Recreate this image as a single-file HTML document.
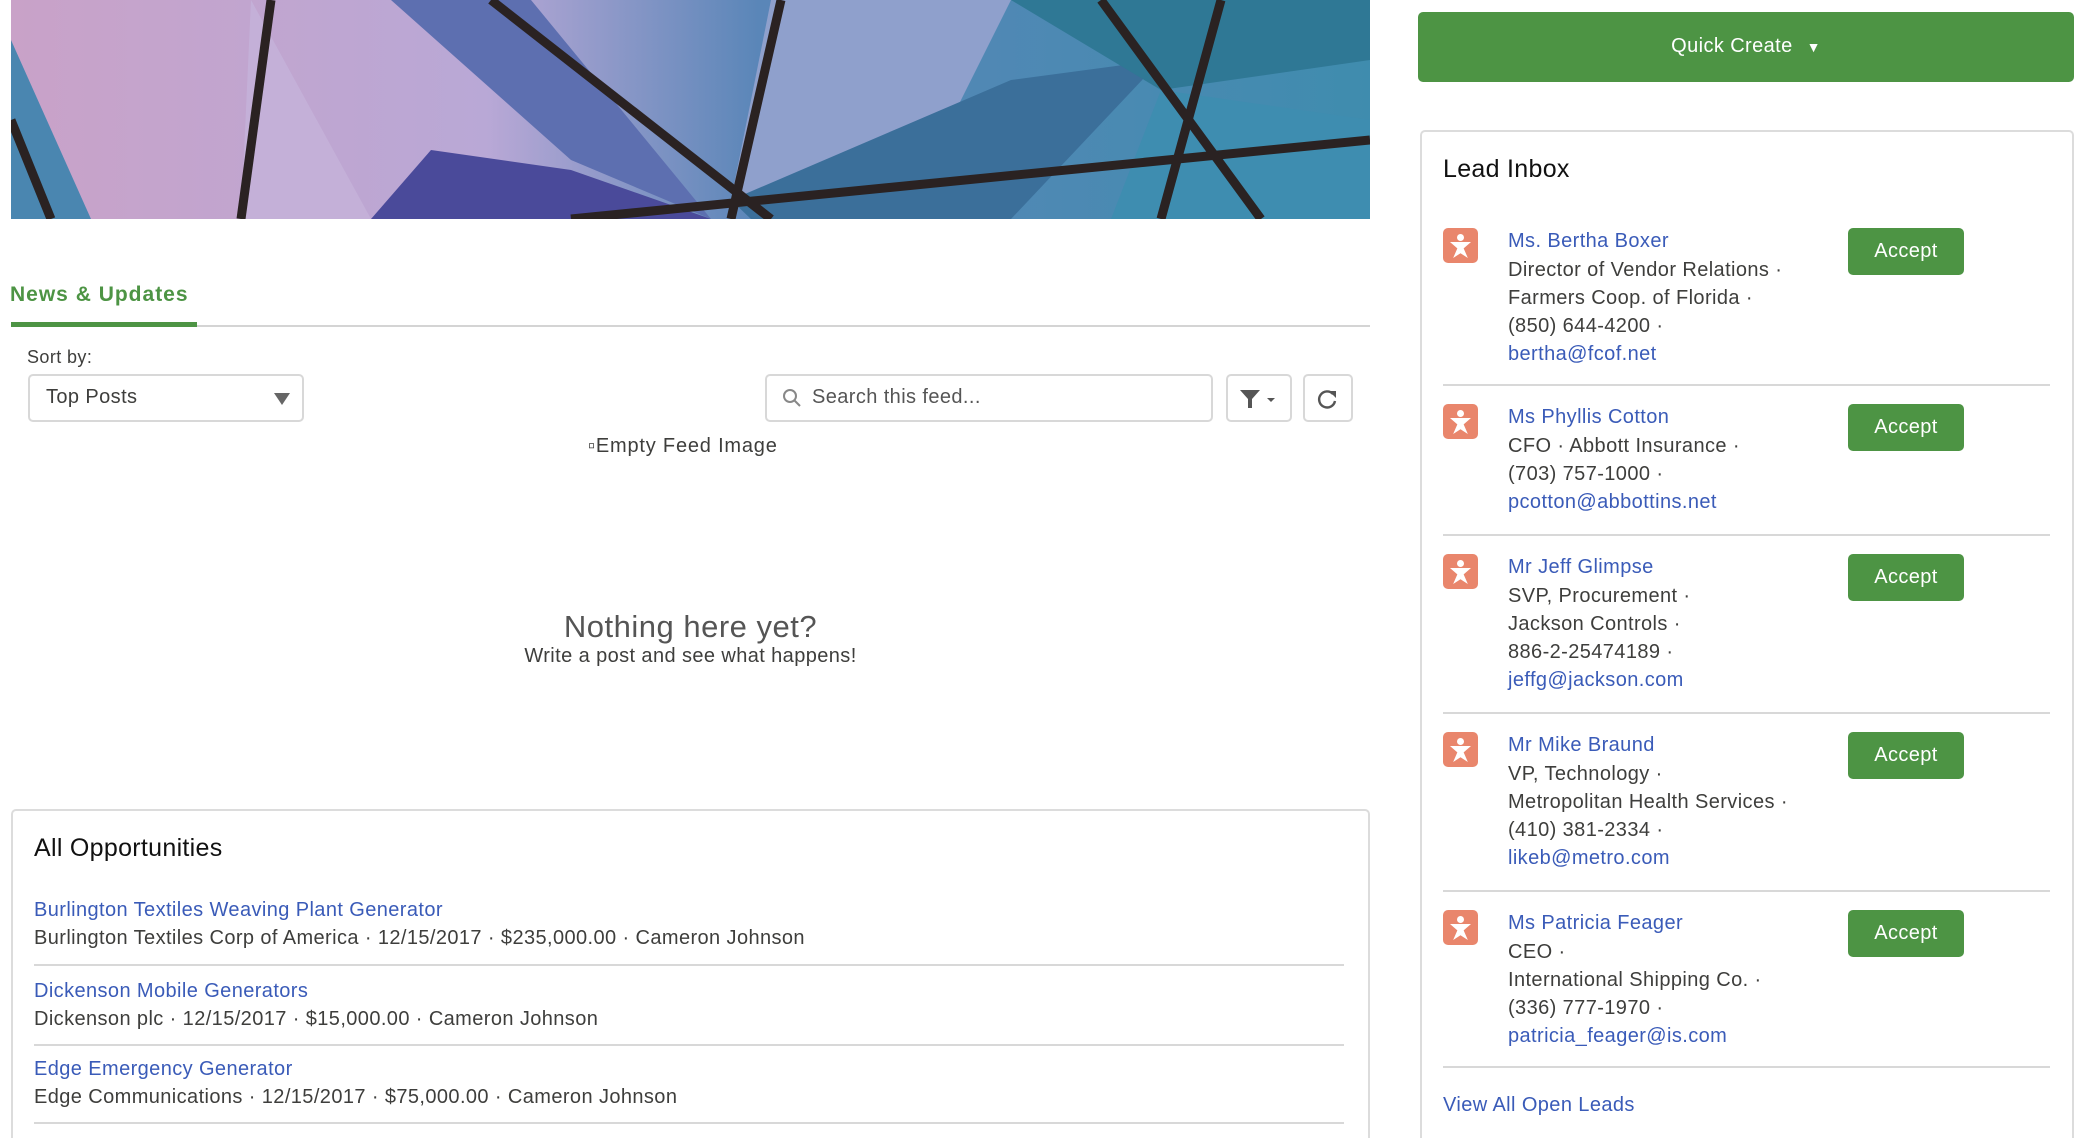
<!DOCTYPE html>
<html style="width:2082px;height:1138px;overflow:hidden"><head><meta charset="utf-8"><style>
*{margin:0;padding:0;box-sizing:border-box}
body{width:2082px;height:1138px;background:#fff;font-family:"Liberation Sans",sans-serif;color:#3e3e3c;position:relative;overflow:hidden}
.a{position:absolute;white-space:nowrap}
.lnk{color:#3a5bb8}
.t{font-size:20px;letter-spacing:.4px}
.line{position:absolute;height:2px;background:#d8d8d8}
.btn{position:absolute;background:#4d9444;color:#fff;border-radius:5px;font-size:20px;text-align:center;letter-spacing:.4px}
.ico{position:absolute;width:35px;height:35px;background:#e9866c;border-radius:5px}
.ico::before{content:"";position:absolute;left:14px;top:6px;width:7px;height:7px;border-radius:50%;background:#fff}
.ico::after{content:"";position:absolute;left:7px;top:14px;width:21px;height:16px;background:#fff;clip-path:polygon(0 0,100% 0,65% 40%,85% 100%,50% 70%,15% 100%,35% 40%)}
</style></head><body>
<svg class="a" style="left:11px;top:0" width="1359" height="219" viewBox="0 0 1359 219">
<defs><linearGradient id="g" x1="0" x2="1" y1="0" y2="0"><stop offset="0" stop-color="#c9a2c8"/><stop offset=".35" stop-color="#b9a8d6"/><stop offset=".55" stop-color="#5a86b8"/><stop offset="1" stop-color="#3f8cae"/></linearGradient></defs>
<rect width="1359" height="219" fill="url(#g)"/>
<polygon points="0,40 80,219 0,219" fill="#4a86b0"/>
<polygon points="240,0 360,219 230,219" fill="#c4b0d8"/>
<polygon points="360,219 420,150 560,170 700,219" fill="#4a4a9a"/>
<polygon points="380,0 520,0 700,219 560,160" fill="#5d6fb0"/>
<polygon points="760,0 1000,0 940,120 720,200" fill="#8fa0cc"/>
<polygon points="720,200 1000,80 1150,60 1000,219 740,219" fill="#3b6f9a"/>
<polygon points="1000,0 1359,0 1359,60 1150,90" fill="#2f7895"/>
<polygon points="1150,90 1359,120 1359,219 1100,219" fill="#3e8db0"/>
<g stroke="#2a2222" stroke-width="9" fill="none">
<line x1="0" y1="120" x2="40" y2="219"/>
<line x1="260" y1="0" x2="230" y2="219"/>
<line x1="480" y1="0" x2="760" y2="219"/>
<line x1="770" y1="0" x2="720" y2="219"/>
<line x1="560" y1="219" x2="1359" y2="140"/>
<line x1="1090" y1="0" x2="1250" y2="219"/>
<line x1="1210" y1="0" x2="1150" y2="219"/>
</g></svg>

<div class="a" style="left:10px;top:283px;font-size:21px;font-weight:bold;color:#4d9444;letter-spacing:1px">News &amp; Updates</div>
<div class="line" style="left:11px;top:325px;width:1359px;background:#d4d4d4"></div>
<div class="a" style="left:11px;top:322px;width:186px;height:5px;background:#4d9444"></div>

<div class="a" style="left:27px;top:347px;font-size:18px;letter-spacing:.4px">Sort by:</div>
<div class="a" style="left:28px;top:374px;width:276px;height:48px;border:2px solid #d8d8d8;border-radius:5px"></div>
<div class="a t" style="left:46px;top:386px">Top Posts</div>
<div class="a" style="left:274px;top:393px;border-left:8px solid transparent;border-right:8px solid transparent;border-top:12px solid #666"></div>

<div class="a" style="left:765px;top:374px;width:448px;height:48px;border:2px solid #d8d8d8;border-radius:5px"></div>
<svg class="a" style="left:782px;top:388px" width="20" height="20"><circle cx="8" cy="8" r="6" stroke="#888" stroke-width="2" fill="none"/><line x1="12" y1="12" x2="18" y2="18" stroke="#888" stroke-width="2"/></svg>
<div class="a t" style="left:812px;top:386px;color:#555">Search this feed...</div>
<div class="a" style="left:1226px;top:374px;width:66px;height:48px;border:2px solid #d8d8d8;border-radius:5px"></div>
<svg class="a" style="left:1240px;top:388px" width="40" height="22"><polygon points="0,2 20,2 12,11 12,20 8,20 8,11" fill="#555"/><polygon points="27,10 35,10 31,14" fill="#555"/></svg>
<div class="a" style="left:1303px;top:374px;width:50px;height:48px;border:2px solid #d8d8d8;border-radius:5px"></div>
<svg class="a" style="left:1317px;top:388px" width="22" height="22"><path d="M16 6 A8 8 0 1 0 18 13" stroke="#555" stroke-width="2.4" fill="none"/><polygon points="12,3 19,3 19,10" fill="#555"/></svg>

<div class="a t" style="left:588px;top:435px;letter-spacing:.8px">▫Empty Feed Image</div>
<div class="a" style="left:0;width:1381px;top:609px;text-align:center;font-size:31px;color:#555;letter-spacing:.5px">Nothing here yet?</div>
<div class="a t" style="left:0;width:1381px;top:645px;text-align:center">Write a post and see what happens!</div>

<div class="a" style="left:11px;top:809px;width:1359px;height:329px;border:2px solid #dcdcdc;border-bottom:none;border-radius:5px 5px 0 0"></div>
<div class="a" style="left:34px;top:834px;font-size:25px;color:#111;letter-spacing:.3px">All Opportunities</div>
<div class="a t lnk" style="left:34px;top:899px">Burlington Textiles Weaving Plant Generator</div>
<div class="a t" style="left:34px;top:927px">Burlington Textiles Corp of America · 12/15/2017 · $235,000.00 · Cameron Johnson</div>
<div class="line" style="left:34px;top:964px;width:1310px"></div>
<div class="a t lnk" style="left:34px;top:980px">Dickenson Mobile Generators</div>
<div class="a t" style="left:34px;top:1008px">Dickenson plc · 12/15/2017 · $15,000.00 · Cameron Johnson</div>
<div class="line" style="left:34px;top:1044px;width:1310px"></div>
<div class="a t lnk" style="left:34px;top:1058px">Edge Emergency Generator</div>
<div class="a t" style="left:34px;top:1086px">Edge Communications · 12/15/2017 · $75,000.00 · Cameron Johnson</div>
<div class="line" style="left:34px;top:1122px;width:1310px"></div>

<div class="btn" style="left:1418px;top:12px;width:656px;height:70px;line-height:68px">Quick Create <span style="font-size:14px;margin-left:8px">▼</span></div>

<div class="a" style="left:1420px;top:130px;width:654px;height:1008px;border:2px solid #dcdcdc;border-bottom:none;border-radius:5px 5px 0 0"></div>
<div class="a" style="left:1443px;top:155px;font-size:25px;color:#111;letter-spacing:.3px">Lead Inbox</div>

<div class="ico" style="left:1443px;top:228px"></div>
<div class="a lnk t" style="left:1508px;top:230px">Ms. Bertha Boxer</div>
<div class="a t" style="left:1508px;top:256px;line-height:28px">Director of Vendor Relations ·<br>Farmers Coop. of Florida ·<br>(850) 644-4200 ·<br><span class="lnk">bertha@fcof.net</span></div>
<div class="btn" style="left:1848px;top:228px;width:116px;height:47px;line-height:47px">Accept</div>
<div class="line" style="left:1443px;top:384px;width:607px"></div>

<div class="ico" style="left:1443px;top:404px"></div>
<div class="a lnk t" style="left:1508px;top:406px">Ms Phyllis Cotton</div>
<div class="a t" style="left:1508px;top:432px;line-height:28px">CFO · Abbott Insurance ·<br>(703) 757-1000 ·<br><span class="lnk">pcotton@abbottins.net</span></div>
<div class="btn" style="left:1848px;top:404px;width:116px;height:47px;line-height:47px">Accept</div>
<div class="line" style="left:1443px;top:534px;width:607px"></div>

<div class="ico" style="left:1443px;top:554px"></div>
<div class="a lnk t" style="left:1508px;top:556px">Mr Jeff Glimpse</div>
<div class="a t" style="left:1508px;top:582px;line-height:28px">SVP, Procurement ·<br>Jackson Controls ·<br>886-2-25474189 ·<br><span class="lnk">jeffg@jackson.com</span></div>
<div class="btn" style="left:1848px;top:554px;width:116px;height:47px;line-height:47px">Accept</div>
<div class="line" style="left:1443px;top:712px;width:607px"></div>

<div class="ico" style="left:1443px;top:732px"></div>
<div class="a lnk t" style="left:1508px;top:734px">Mr Mike Braund</div>
<div class="a t" style="left:1508px;top:760px;line-height:28px">VP, Technology ·<br>Metropolitan Health Services ·<br>(410) 381-2334 ·<br><span class="lnk">likeb@metro.com</span></div>
<div class="btn" style="left:1848px;top:732px;width:116px;height:47px;line-height:47px">Accept</div>
<div class="line" style="left:1443px;top:890px;width:607px"></div>

<div class="ico" style="left:1443px;top:910px"></div>
<div class="a lnk t" style="left:1508px;top:912px">Ms Patricia Feager</div>
<div class="a t" style="left:1508px;top:938px;line-height:28px">CEO ·<br>International Shipping Co. ·<br>(336) 777-1970 ·<br><span class="lnk">patricia_feager@is.com</span></div>
<div class="btn" style="left:1848px;top:910px;width:116px;height:47px;line-height:47px">Accept</div>
<div class="line" style="left:1443px;top:1066px;width:607px"></div>

<div class="a lnk t" style="left:1443px;top:1094px">View All Open Leads</div>
</body></html>
